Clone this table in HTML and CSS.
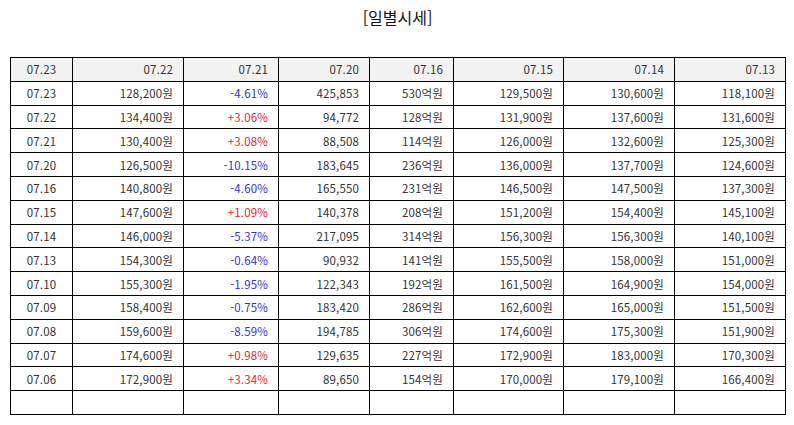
FILE: index.html
```html
<!DOCTYPE html>
<html lang="ko">
<head>
<meta charset="utf-8">
<title>일별시세</title>
<link rel="stylesheet" href="styles.css">
</head>
<body>
<div class="page">
  <h2 class="title">[일별시세]</h2>
  <table class="prices">
    <colgroup>
      <col class="c1"><col class="c2"><col class="c3"><col class="c4"><col class="c5"><col class="c6"><col class="c7"><col class="c8">
    </colgroup>
    <thead>
      <tr><th class="date">07.23</th><th>07.22</th><th>07.21</th><th>07.20</th><th>07.16</th><th>07.15</th><th>07.14</th><th>07.13</th></tr>
    </thead>
    <tbody>
      <tr><td class="date">07.23</td><td>128,200원</td><td class="down">-4.61%</td><td>425,853</td><td>530억원</td><td>129,500원</td><td>130,600원</td><td>118,100원</td></tr>
      <tr><td class="date">07.22</td><td>134,400원</td><td class="up">+3.06%</td><td>94,772</td><td>128억원</td><td>131,900원</td><td>137,600원</td><td>131,600원</td></tr>
      <tr><td class="date">07.21</td><td>130,400원</td><td class="up">+3.08%</td><td>88,508</td><td>114억원</td><td>126,000원</td><td>132,600원</td><td>125,300원</td></tr>
      <tr><td class="date">07.20</td><td>126,500원</td><td class="down">-10.15%</td><td>183,645</td><td>236억원</td><td>136,000원</td><td>137,700원</td><td>124,600원</td></tr>
      <tr><td class="date">07.16</td><td>140,800원</td><td class="down">-4.60%</td><td>165,550</td><td>231억원</td><td>146,500원</td><td>147,500원</td><td>137,300원</td></tr>
      <tr><td class="date">07.15</td><td>147,600원</td><td class="up">+1.09%</td><td>140,378</td><td>208억원</td><td>151,200원</td><td>154,400원</td><td>145,100원</td></tr>
      <tr><td class="date">07.14</td><td>146,000원</td><td class="down">-5.37%</td><td>217,095</td><td>314억원</td><td>156,300원</td><td>156,300원</td><td>140,100원</td></tr>
      <tr><td class="date">07.13</td><td>154,300원</td><td class="down">-0.64%</td><td>90,932</td><td>141억원</td><td>155,500원</td><td>158,000원</td><td>151,000원</td></tr>
      <tr><td class="date">07.10</td><td>155,300원</td><td class="down">-1.95%</td><td>122,343</td><td>192억원</td><td>161,500원</td><td>164,900원</td><td>154,000원</td></tr>
      <tr><td class="date">07.09</td><td>158,400원</td><td class="down">-0.75%</td><td>183,420</td><td>286억원</td><td>162,600원</td><td>165,000원</td><td>151,500원</td></tr>
      <tr><td class="date">07.08</td><td>159,600원</td><td class="down">-8.59%</td><td>194,785</td><td>306억원</td><td>174,600원</td><td>175,300원</td><td>151,900원</td></tr>
      <tr><td class="date">07.07</td><td>174,600원</td><td class="up">+0.98%</td><td>129,635</td><td>227억원</td><td>172,900원</td><td>183,000원</td><td>170,300원</td></tr>
      <tr><td class="date">07.06</td><td>172,900원</td><td class="up">+3.34%</td><td>89,650</td><td>154억원</td><td>170,000원</td><td>179,100원</td><td>166,400원</td></tr>
      <tr class="empty"><td></td><td></td><td></td><td></td><td></td><td></td><td></td><td></td></tr>
    </tbody>
  </table>
</div>
</body>
</html>
```

FILE: styles.css
```css
html, body {
  margin: 0;
  padding: 0;
  background: #fff;
}
.page {
  padding: 0 9px 0 10px;
  font-family: "Noto Sans CJK KR", "Noto Sans", sans-serif;
  color: #222;
}
.title {
  margin: 0;
  height: 57px;
  padding-top: 5px;
  box-sizing: border-box;
  text-align: center;
  font-size: 16px;
  font-weight: 400;
  line-height: 24px;
  color: #111;
}
.prices {
  width: 775px;
  table-layout: fixed;
  border-collapse: collapse;
  border: 1px solid #000;
  font-size: 11.5px;
  letter-spacing: 0.15px;
}
.c1 { width: 62px; }
.c2 { width: 111px; }
.c3 { width: 95px; }
.c4 { width: 91px; }
.c5 { width: 84px; }
.c6 { width: 110px; }
.c7 { width: 111px; }
.c8 { width: 111px; }
.prices tr {
  height: 23.8px;
}
.prices th,
.prices td {
  border: 1px solid #000;
  padding: 0 10px 0 4px;
  text-align: right;
  font-weight: 400;
  line-height: 14px;
  color: #333;
  white-space: nowrap;
}
.prices th {
  background: #f2f2f2;
}
.prices .date {
  text-align: center;
  padding: 0;
}
.prices .up { color: #e0262f; }
.prices .down { color: #3535c8; }
```
